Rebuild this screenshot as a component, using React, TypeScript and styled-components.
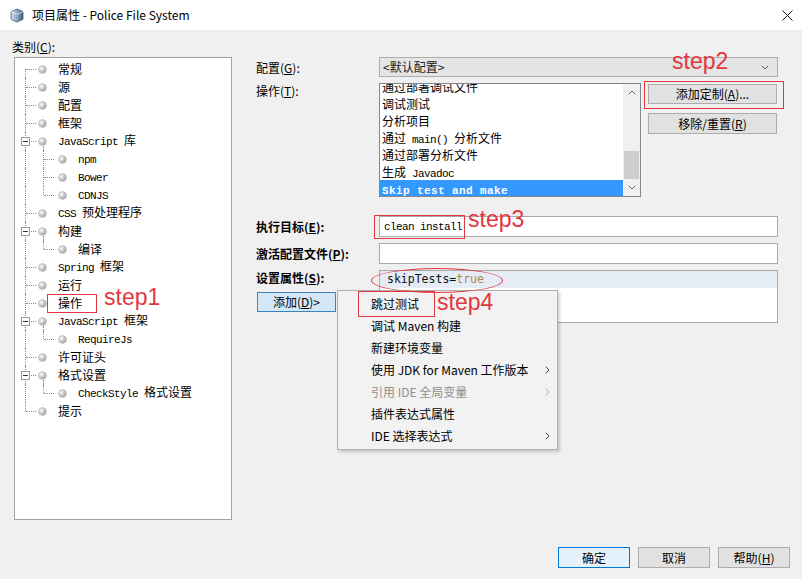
import React from "react";
import styled, { createGlobalStyle } from "styled-components";

const CJK = `"Noto Sans CJK SC", "Noto Sans", sans-serif`;
const RED = "#e2373f";

const GlobalStyle = createGlobalStyle`
  html, body { margin: 0; padding: 0; background: #f0f0f0; }
  body { font-family: ${CJK}; font-size: 12px; color: #000; }
  * { box-sizing: border-box; }
`;

const Window = styled.div`
  position: relative;
  width: 802px;
  height: 579px;
  display: flex;
  flex-direction: column;
  overflow: hidden;
  background: #f0f0f0;
`;

const TitleBar = styled.div`
  height: 30px;
  flex: none;
  background: #fff;
  display: flex;
  align-items: center;
  padding: 0 10px 0 10px;
`;

const TitleText = styled.span`
  margin-left: 8px;
  font-size: 12px;
  line-height: 16px;
  color: #000;
  flex: 1;
`;

const CloseBtn = styled.span`
  width: 20px;
  display: flex;
  justify-content: center;
  margin-right: -5px;
`;

const Body = styled.div`
  flex: 1;
  padding: 9px 12px 0 14px;
  display: flex;
  flex-direction: column;
`;

const Main = styled.div`
  display: flex;
  align-items: flex-start;
  gap: 24px;
`;

const LeftCol = styled.div`
  width: 218px;
  display: flex;
  flex-direction: column;
`;

const CatLabel = styled.div`
  margin-left: -2px;
  height: 16px;
  line-height: 16px;
  margin-bottom: 2px;
`;

const Mn = styled.span`
  text-decoration: underline;
  text-underline-offset: 1px;
`;

const TreeBox = styled.div`
  height: 463px;
  background: #fff;
  border: 1px solid #a3a3a3;
  padding: 2px 0 0 1px;
`;

const TreeRow = styled.div`
  height: 18px;
  display: flex;
  align-items: center;
  line-height: 18px;
  white-space: nowrap;
`;

type VLine = "full" | "top" | "bottom" | "none";

const Guide = styled.span<{ $v: VLine; $branch?: boolean }>`
  position: relative;
  width: 18px;
  height: 18px;
  flex: none;
  &::before {
    content: "";
    position: absolute;
    left: 9px;
    top: ${(p) => (p.$v === "bottom" ? "9px" : "0")};
    bottom: ${(p) => (p.$v === "top" ? "9px" : "0")};
    border-left: 1px dotted #8c8c8c;
    display: ${(p) => (p.$v === "none" ? "none" : "block")};
  }
  &::after {
    content: "";
    position: absolute;
    left: 10px;
    right: -2px;
    top: 9px;
    border-top: 1px dotted #8c8c8c;
    display: ${(p) => (p.$branch ? "block" : "none")};
  }
`;

const Expander = styled.span`
  position: absolute;
  left: 5px;
  top: 5px;
  width: 9px;
  height: 9px;
  border: 1px solid #9a9a9a;
  background: #fff;
  z-index: 1;
  &::after {
    content: "";
    position: absolute;
    left: 1px;
    right: 1px;
    top: 3px;
    border-top: 1px solid #333;
  }
`;

const Bullet = styled.span<{ $ml: number; $open?: boolean }>`
  position: relative;
  flex: none;
  width: 7px;
  height: 7px;
  margin-left: ${(p) => p.$ml}px;
  border-radius: 50%;
  background: radial-gradient(circle at 35% 35%, #ffffff 0%, #c4c4c4 45%, #8a8a8a 100%);
  box-shadow: 0 0 0 0.5px #8f8f8f;
  &::after {
    content: "";
    position: absolute;
    left: 4px;
    top: 8px;
    height: 6px;
    border-left: 1px dotted #8c8c8c;
    display: ${(p) => (p.$open ? "block" : "none")};
  }
`;

const TreeText = styled.span`
  margin-left: 12px;
  font-size: 12px;
`;

const Latin = styled.span`
  font-family: "Liberation Mono", "DejaVu Sans Mono", monospace;
  font-size: 11px;
  letter-spacing: -0.6px;
`;

function mixed(text: string) {
  return text
    .split(/([\x20-\x7e]+)/)
    .filter(Boolean)
    .map((part, i) =>
      /^[\x20-\x7e]+$/.test(part) ? (
        <Latin key={i}>{part}</Latin>
      ) : (
        <React.Fragment key={i}>{part}</React.Fragment>
      )
    );
}

const RightCol = styled.div`
  width: 522px;
  display: flex;
  flex-direction: column;
  padding-top: 18px;
`;

const FieldRow = styled.div<{ $mt?: number }>`
  display: flex;
  align-items: flex-start;
  margin-top: ${(p) => p.$mt ?? 0}px;
`;

const Label = styled.div<{ $bold?: boolean; $h?: number }>`
  width: 123px;
  flex: none;
  height: ${(p) => p.$h ?? 16}px;
  line-height: ${(p) => p.$h ?? 16}px;
  font-weight: ${(p) => (p.$bold ? 700 : 400)};
  font-size: 12px;
  white-space: nowrap;
`;

const LabelCol = styled.div`
  width: 123px;
  flex: none;
  display: flex;
  flex-direction: column;
`;

const Combo = styled.div`
  flex: 1;
  height: 20px;
  border: 1px solid #adadad;
  background: #e5e5e5;
  display: flex;
  align-items: center;
  padding: 0 8px 0 3px;
  line-height: 18px;
  color: #222;
`;

const ComboText = styled.span`
  flex: 1;
`;

const ListBox = styled.div`
  width: 262px;
  height: 114px;
  border: 1px solid #828790;
  background: #fff;
  display: flex;
  overflow: hidden;
`;

const ListItems = styled.div`
  flex: 1;
  overflow: hidden;
`;

const ListInner = styled.div`
  margin-top: -6px;
`;

const ListItem = styled.div<{ $sel?: boolean }>`
  height: 17px;
  line-height: 17px;
  padding-left: 2px;
  white-space: nowrap;
  background: ${(p) => (p.$sel ? "#3399ff" : "transparent")};
  color: ${(p) => (p.$sel ? "#fff" : "#000")};
  font-weight: ${(p) => (p.$sel ? 700 : 400)};
  ${Latin} {
    letter-spacing: ${(p) => (p.$sel ? "0.4px" : "-0.6px")};
  }
`;

const ScrollBar = styled.div`
  width: 17px;
  flex: none;
  background: #f0f0f0;
  display: flex;
  flex-direction: column;
`;

const ScrollArrow = styled.div`
  height: 17px;
  display: flex;
  align-items: center;
  justify-content: center;
`;

const ScrollTrack = styled.div`
  flex: 1;
  display: flex;
  flex-direction: column;
  justify-content: flex-end;
  align-items: center;
`;

const Thumb = styled.div`
  width: 15px;
  height: 28px;
  background: #cdcdcd;
`;

const SideButtons = styled.div`
  margin-left: 7px;
  width: 129px;
  display: flex;
  flex-direction: column;
  padding-top: 1px;
  gap: 9px;
`;

const Button = styled.button<{ $variant?: "default" | "pressed"; $w?: number; $h?: number }>`
  width: ${(p) => (p.$w ? `${p.$w}px` : "100%")};
  height: ${(p) => p.$h ?? 21}px;
  padding: 0;
  font-family: ${CJK};
  font-size: 12px;
  line-height: 16px;
  color: #000;
  background: ${(p) => (p.$variant === "default" ? "#e5f1fb" : p.$variant === "pressed" ? "#d4e7f7" : "#e1e1e1")};
  border: 1px solid ${(p) => (p.$variant === "default" ? "#0078d7" : p.$variant === "pressed" ? "#3d83c0" : "#adadad")};
  display: flex;
  align-items: center;
  justify-content: center;
`;

const Input = styled.div<{ $h?: number }>`
  flex: 1;
  height: ${(p) => p.$h ?? 21}px;
  border: 1px solid #a9a9a9;
  background: #fff;
  padding-left: 4px;
  display: flex;
  align-items: center;
  white-space: nowrap;
`;

const TextArea = styled.div`
  flex: 1;
  height: 53px;
  border: 1px solid #a9a9a9;
  background: #fff;
`;

const PropRow = styled.div`
  height: 17px;
  background: #e6ecf6;
  padding-left: 7px;
  line-height: 17px;
  font-family: "DejaVu Sans Mono", monospace;
  font-size: 11.5px;
  color: #111;
`;

const PropValue = styled.span`
  color: #b0864a;
`;

const AddButtonWrap = styled.div`
  margin-top: 6px;
  margin-left: 1px;
`;

const Footer = styled.div`
  margin-top: 27px;
  display: flex;
  justify-content: flex-end;
  gap: 8px;
`;

const Menu = styled.div`
  position: absolute;
  left: 337px;
  top: 290px;
  width: 221px;
  padding: 2px 0;
  background: #f2f2f2;
  border: 1px solid #b0b0b0;
  box-shadow: 2px 2px 3px rgba(0, 0, 0, 0.18);
`;

const MenuItem = styled.div<{ $disabled?: boolean }>`
  position: relative;
  height: 22px;
  line-height: 22px;
  padding-left: 33px;
  font-size: 12px;
  white-space: nowrap;
  color: ${(p) => (p.$disabled ? "#8f8f8f" : "#000")};
`;

const MenuArrow = styled.span`
  position: absolute;
  right: 7px;
  top: 7px;
  display: flex;
`;

const RedBox = styled.div<{ $x: number; $y: number; $w: number; $h: number; $round?: boolean }>`
  position: absolute;
  left: ${(p) => p.$x}px;
  top: ${(p) => p.$y}px;
  width: ${(p) => p.$w}px;
  height: ${(p) => p.$h}px;
  border: 1px solid ${RED};
  border-radius: ${(p) => (p.$round ? "50%" : "0")};
  pointer-events: none;
`;

const StepText = styled.div<{ $x: number; $y: number }>`
  position: absolute;
  left: ${(p) => p.$x}px;
  top: ${(p) => p.$y}px;
  font-family: "Liberation Sans", Arial, sans-serif;
  font-size: 23px;
  line-height: 23px;
  color: ${RED};
  pointer-events: none;
`;

const Chevron = ({ dir, color = "#606060" }: { dir: "up" | "down" | "right"; color?: string }) => {
  if (dir === "right") {
    return (
      <svg width="5" height="8" viewBox="0 0 5 8">
        <path d="M0.8 0.8 L4 4 L0.8 7.2" fill="none" stroke={color} strokeWidth="1" />
      </svg>
    );
  }
  return (
    <svg width="8" height="5" viewBox="0 0 8 5">
      <path
        d={dir === "down" ? "M0.8 0.8 L4 4 L7.2 0.8" : "M0.8 4.2 L4 1 L7.2 4.2"}
        fill="none"
        stroke={color}
        strokeWidth="1"
      />
    </svg>
  );
};

const ProjectIcon = () => (
  <svg width="14" height="15" viewBox="0 0 14 15">
    <defs>
      <linearGradient id="pg" x1="0" x2="1" y1="0" y2="0">
        <stop offset="0" stopColor="#d7e1ee" />
        <stop offset="0.5" stopColor="#8ea5c3" />
        <stop offset="1" stopColor="#3f5b80" />
      </linearGradient>
    </defs>
    <path
      d="M7 1 L12.3 3.3 Q13 3.7 13 4.6 V10.4 Q13 11.3 12.3 11.7 L7 14 L1.7 11.7 Q1 11.3 1 10.4 V4.6 Q1 3.7 1.7 3.3 Z"
      fill="url(#pg)"
      stroke="#405a7c"
      strokeWidth="0.8"
    />
    <path d="M1.6 3.9 L7 6.3 L12.4 3.9" fill="none" stroke="#eef3f8" strokeWidth="0.8" />
  </svg>
);

const CloseIcon = () => (
  <svg width="11" height="11" viewBox="0 0 11 11">
    <path d="M0.5 0.5 L10.5 10.5 M10.5 0.5 L0.5 10.5" stroke="#111" strokeWidth="1" />
  </svg>
);

type TNode = {
  label: string;
  level: 1 | 2;
  parent?: boolean;
  lastChild?: boolean;
  first?: boolean;
  last?: boolean;
};

const tree: TNode[] = [
  { label: "常规", level: 1, first: true },
  { label: "源", level: 1 },
  { label: "配置", level: 1 },
  { label: "框架", level: 1 },
  { label: "JavaScript 库", level: 1, parent: true },
  { label: "npm", level: 2 },
  { label: "Bower", level: 2 },
  { label: "CDNJS", level: 2, lastChild: true },
  { label: "CSS 预处理程序", level: 1 },
  { label: "构建", level: 1, parent: true },
  { label: "编译", level: 2, lastChild: true },
  { label: "Spring 框架", level: 1 },
  { label: "运行", level: 1 },
  { label: "操作", level: 1 },
  { label: "JavaScript 框架", level: 1, parent: true },
  { label: "RequireJs", level: 2, lastChild: true },
  { label: "许可证头", level: 1 },
  { label: "格式设置", level: 1, parent: true },
  { label: "CheckStyle 格式设置", level: 2, lastChild: true },
  { label: "提示", level: 1, last: true },
];

const actions = [
  "通过部署调试文件",
  "调试测试",
  "分析项目",
  "通过 main() 分析文件",
  "通过部署分析文件",
  "生成 Javadoc",
  "Skip test and make",
];

const menuItems: { label: string; sub?: boolean; disabled?: boolean }[] = [
  { label: "跳过测试" },
  { label: "调试 Maven 构建" },
  { label: "新建环境变量" },
  { label: "使用 JDK for Maven 工作版本", sub: true },
  { label: "引用 IDE 全局变量", sub: true, disabled: true },
  { label: "插件表达式属性" },
  { label: "IDE 选择表达式", sub: true },
];

function TreeView() {
  return (
    <TreeBox>
      {tree.map((n, i) => {
        if (n.level === 1) {
          const v: VLine = n.first ? "bottom" : n.last ? "top" : "full";
          return (
            <TreeRow key={i}>
              <Guide $v={v} $branch>
                {n.parent && <Expander />}
              </Guide>
              <Bullet $ml={5} $open={n.parent} />
              <TreeText>{mixed(n.label)}</TreeText>
            </TreeRow>
          );
        }
        return (
          <TreeRow key={i}>
            <Guide $v="full" />
            <Guide $v={n.lastChild ? "top" : "full"} $branch />
            <Bullet $ml={7} />
            <TreeText>{mixed(n.label)}</TreeText>
          </TreeRow>
        );
      })}
    </TreeBox>
  );
}

export default function App() {
  return (
    <>
      <GlobalStyle />
      <Window>
        <TitleBar>
          <ProjectIcon />
          <TitleText>项目属性 - Police File System</TitleText>
          <CloseBtn>
            <CloseIcon />
          </CloseBtn>
        </TitleBar>
        <Body>
          <Main>
            <LeftCol>
              <CatLabel>
                类别(<Mn>C</Mn>):
              </CatLabel>
              <TreeView />
            </LeftCol>
            <RightCol>
              <FieldRow>
                <Label $h={21}>
                  配置(<Mn>G</Mn>):
                </Label>
                <Combo>
                  <ComboText>&lt;默认配置&gt;</ComboText>
                  <Chevron dir="down" />
                </Combo>
              </FieldRow>
              <FieldRow $mt={5}>
                <Label>
                  操作(<Mn>T</Mn>):
                </Label>
                <ListBox>
                  <ListItems>
                    <ListInner>
                      {actions.map((a, i) => (
                        <ListItem key={i} $sel={i === actions.length - 1}>
                          {mixed(a)}
                        </ListItem>
                      ))}
                    </ListInner>
                  </ListItems>
                  <ScrollBar>
                    <ScrollArrow>
                      <Chevron dir="up" />
                    </ScrollArrow>
                    <ScrollTrack>
                      <Thumb />
                    </ScrollTrack>
                    <ScrollArrow>
                      <Chevron dir="down" />
                    </ScrollArrow>
                  </ScrollBar>
                </ListBox>
                <SideButtons>
                  <Button $h={20}>
                    添加定制(<Mn>A</Mn>)...
                  </Button>
                  <Button>
                    移除/重置(<Mn>R</Mn>)
                  </Button>
                </SideButtons>
              </FieldRow>
              <FieldRow $mt={19}>
                <Label $bold $h={21}>
                  执行目标(<Mn>E</Mn>):
                </Label>
                <Input>{mixed("clean install")}</Input>
              </FieldRow>
              <FieldRow $mt={6}>
                <Label $bold $h={21}>
                  激活配置文件(<Mn>P</Mn>):
                </Label>
                <Input />
              </FieldRow>
              <FieldRow $mt={6}>
                <LabelCol>
                  <Label $bold>
                    设置属性(<Mn>S</Mn>):
                  </Label>
                  <AddButtonWrap>
                    <Button $variant="pressed" $w={79} $h={20}>
                      添加(<Mn>D</Mn>)&gt;
                    </Button>
                  </AddButtonWrap>
                </LabelCol>
                <TextArea>
                  <PropRow>
                    skipTests=<PropValue>true</PropValue>
                  </PropRow>
                </TextArea>
              </FieldRow>
            </RightCol>
          </Main>
          <Footer>
            <Button $variant="default" $w={72}>
              确定
            </Button>
            <Button $w={72}>取消</Button>
            <Button $w={72}>
              帮助(<Mn>H</Mn>)
            </Button>
          </Footer>
        </Body>

        <Menu>
          {menuItems.map((m, i) => (
            <MenuItem key={i} $disabled={m.disabled}>
              {m.label}
              {m.sub && (
                <MenuArrow>
                  <Chevron dir="right" color={m.disabled ? "#b5b5b5" : "#444"} />
                </MenuArrow>
              )}
            </MenuItem>
          ))}
        </Menu>

        <RedBox $x={47} $y={294} $w={50} $h={19} />
        <StepText $x={104} $y={286}>step1</StepText>
        <RedBox $x={644} $y={81} $w={140} $h={28} />
        <StepText $x={672} $y={50}>step2</StepText>
        <RedBox $x={374} $y={215} $w={91} $h={24} />
        <StepText $x={468} $y={208}>step3</StepText>
        <RedBox $x={371} $y={268} $w={132} $h={25} $round />
        <RedBox $x={358} $y={291} $w={77} $h={26} />
        <StepText $x={437} $y={291}>step4</StepText>
      </Window>
    </>
  );
}
